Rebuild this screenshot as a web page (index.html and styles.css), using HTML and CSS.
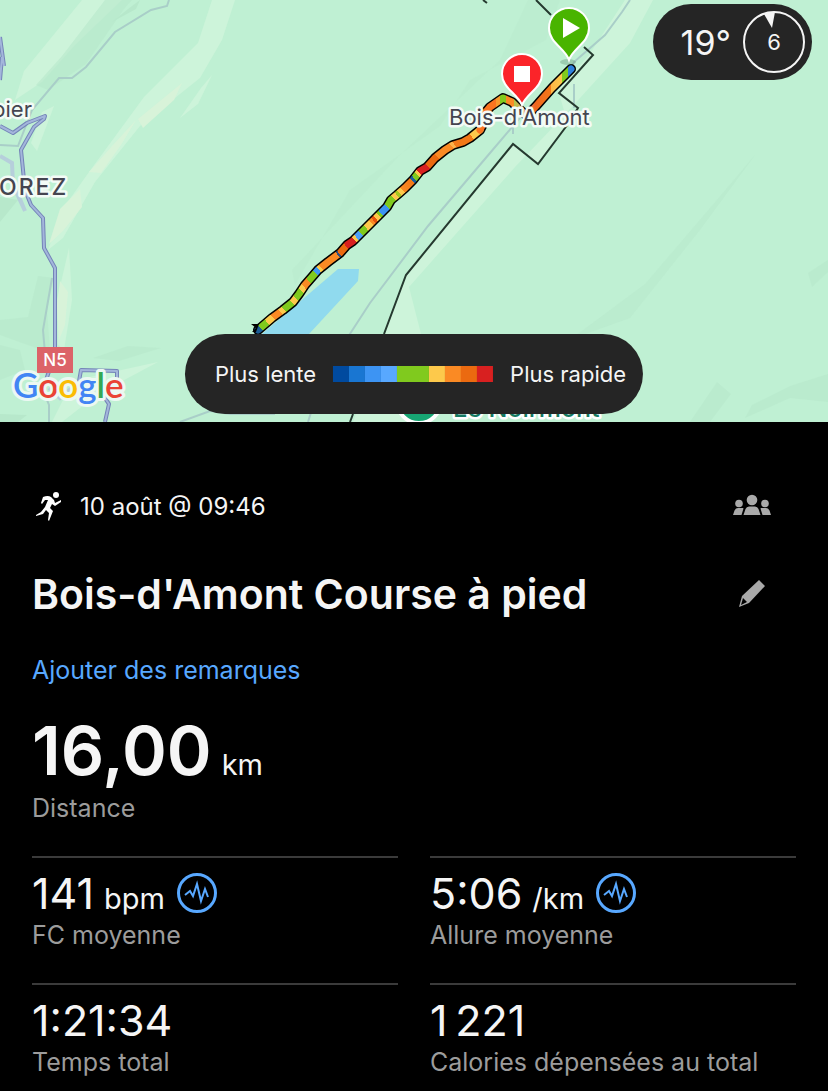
FILE: index.html
```html
<!DOCTYPE html>
<html lang="fr">
<head>
<meta charset="utf-8">
<meta name="viewport" content="width=device-width, initial-scale=1">
<title>Bois-d'Amont Course à pied</title>
<link rel="stylesheet" href="styles.css">
</head>
<body>
<section class="map" aria-label="Parcours">
  <svg class="map-canvas" viewBox="0 0 828 422" preserveAspectRatio="xMidYMid slice" role="img" aria-label="Carte du parcours">
    <defs>
      <linearGradient id="pace" gradientUnits="userSpaceOnUse" x1="258" y1="330" x2="480" y2="128">
        <stop offset="0.01" stop-color="#1c5c94"/><stop offset="0.01" stop-color="#80ca1e"/>
        <stop offset="0.04" stop-color="#80ca1e"/><stop offset="0.04" stop-color="#fdc94b"/>
        <stop offset="0.065" stop-color="#fdc94b"/><stop offset="0.065" stop-color="#fa8a24"/>
        <stop offset="0.095" stop-color="#fa8a24"/><stop offset="0.095" stop-color="#fdc94b"/>
        <stop offset="0.11" stop-color="#fdc94b"/><stop offset="0.11" stop-color="#80ca1e"/>
        <stop offset="0.145" stop-color="#80ca1e"/><stop offset="0.145" stop-color="#fdc94b"/>
        <stop offset="0.165" stop-color="#fdc94b"/><stop offset="0.165" stop-color="#80ca1e"/>
        <stop offset="0.195" stop-color="#80ca1e"/><stop offset="0.195" stop-color="#fdc94b"/>
        <stop offset="0.21" stop-color="#fdc94b"/><stop offset="0.21" stop-color="#fa8a24"/>
        <stop offset="0.235" stop-color="#fa8a24"/><stop offset="0.235" stop-color="#80ca1e"/>
        <stop offset="0.27" stop-color="#80ca1e"/><stop offset="0.27" stop-color="#4098f0"/>
        <stop offset="0.285" stop-color="#4098f0"/><stop offset="0.285" stop-color="#fdc94b"/>
        <stop offset="0.295" stop-color="#fdc94b"/><stop offset="0.295" stop-color="#fa8a24"/>
        <stop offset="0.365" stop-color="#fa8a24"/><stop offset="0.365" stop-color="#30507c"/>
        <stop offset="0.372" stop-color="#30507c"/><stop offset="0.372" stop-color="#eb6a10"/>
        <stop offset="0.405" stop-color="#eb6a10"/><stop offset="0.405" stop-color="#d82020"/>
        <stop offset="0.44" stop-color="#d82020"/><stop offset="0.44" stop-color="#fdc94b"/>
        <stop offset="0.45" stop-color="#fdc94b"/><stop offset="0.45" stop-color="#4fa0f6"/>
        <stop offset="0.47" stop-color="#4fa0f6"/><stop offset="0.47" stop-color="#80ca1e"/>
        <stop offset="0.495" stop-color="#80ca1e"/><stop offset="0.495" stop-color="#fdc94b"/>
        <stop offset="0.52" stop-color="#fdc94b"/><stop offset="0.52" stop-color="#fa8a24"/>
        <stop offset="0.53" stop-color="#fa8a24"/><stop offset="0.53" stop-color="#e9530f"/>
        <stop offset="0.54" stop-color="#e9530f"/><stop offset="0.54" stop-color="#fdc94b"/>
        <stop offset="0.555" stop-color="#fdc94b"/><stop offset="0.555" stop-color="#80ca1e"/>
        <stop offset="0.565" stop-color="#80ca1e"/><stop offset="0.565" stop-color="#3c94f2"/>
        <stop offset="0.595" stop-color="#3c94f2"/><stop offset="0.595" stop-color="#80ca1e"/>
        <stop offset="0.63" stop-color="#80ca1e"/><stop offset="0.63" stop-color="#fdc94b"/>
        <stop offset="0.645" stop-color="#fdc94b"/><stop offset="0.645" stop-color="#a4c820"/>
        <stop offset="0.655" stop-color="#a4c820"/><stop offset="0.655" stop-color="#fdc94b"/>
        <stop offset="0.67" stop-color="#fdc94b"/><stop offset="0.67" stop-color="#fa8a24"/>
        <stop offset="0.715" stop-color="#f27818"/><stop offset="0.715" stop-color="#1e5f9c"/>
        <stop offset="0.725" stop-color="#1e5f9c"/><stop offset="0.725" stop-color="#80ca1e"/>
        <stop offset="0.74" stop-color="#80ca1e"/><stop offset="0.74" stop-color="#fdc94b"/>
        <stop offset="0.75" stop-color="#fdc94b"/><stop offset="0.75" stop-color="#d82020"/>
        <stop offset="0.785" stop-color="#d82020"/><stop offset="0.785" stop-color="#eb6a10"/>
        <stop offset="0.83" stop-color="#eb6a10"/><stop offset="0.83" stop-color="#fa8a24"/>
        <stop offset="0.89" stop-color="#fa8a24"/><stop offset="0.89" stop-color="#fdb34b"/>
        <stop offset="0.9" stop-color="#fdb34b"/><stop offset="0.9" stop-color="#f27818"/>
        <stop offset="0.96" stop-color="#f27818"/><stop offset="0.96" stop-color="#fdc94b"/>
      </linearGradient>
      <linearGradient id="paceNorth" gradientUnits="userSpaceOnUse" x1="484" y1="0" x2="572" y2="0">
        <stop offset="0.14" stop-color="#fa7420"/><stop offset="0.14" stop-color="#f79a2c"/>
        <stop offset="0.18" stop-color="#f79a2c"/><stop offset="0.18" stop-color="#80ca1e"/>
        <stop offset="0.25" stop-color="#80ca1e"/><stop offset="0.25" stop-color="#fa8a24"/>
        <stop offset="0.34" stop-color="#fa8a24"/><stop offset="0.34" stop-color="#b0c845"/>
        <stop offset="0.43" stop-color="#d6a05c"/><stop offset="0.5" stop-color="#ee8780"/>
        <stop offset="0.58" stop-color="#ee6620"/><stop offset="0.76" stop-color="#f27818"/>
        <stop offset="0.76" stop-color="#fdb646"/><stop offset="0.89" stop-color="#fdc94b"/>
        <stop offset="0.89" stop-color="#80ca1e"/><stop offset="0.95" stop-color="#80ca1e"/>
        <stop offset="0.95" stop-color="#2e7fdc"/>
      </linearGradient>
    </defs>
    <rect class="land" width="828" height="422"/>

    <g class="relief-light">
      <path d="M82 0H122L75 45 42 82 15 100 24 71Z"/>
      <path d="M235 0H212L198 43 144 97 89 172 62 210 48 250 63 238 95 182 140 126 200 78 222 40Z"/>
      <path d="M201 88 180 118 198 104 212 75Z"/>
      <path d="M31 143 42 112 54 106 37 151Z"/>
      <path d="M69 248 57 300 58 345 64 350 72 300Z"/>
      <path d="M85 378 158 362 98 394 62 422H52L68 390Z"/>
      <path d="M625 0H653L630 43 560 120 515 167 409 287 421 334H384L406 275 513 144 537 164 568 124 558 90 589 55Z"/>
      <path d="M356 414H420V422H353Z"/>
    </g>
    <g class="relief-warm">
      <path d="M182 83 138 119 143 128 174 100Z"/>
      <path d="M136 120 112 146 89 172 101 173 121 145Z"/>
      <path d="M80 189 60 209 49 244 63 231 82 207Z"/>
      <path d="M60 281 57 305 59 340 65 325 68 292Z"/>
    </g>
    <g class="relief-dark">
      <path d="M105 0 62 56 36 85 48 90 86 64 124 9 132 0Z" opacity=".6"/>
      <path d="M128 9 112 22 136 9 140 0Z"/>
      <path d="M528 0H560L546 40 470 80 440 126 350 190 295 285 292 270 400 155 500 60Z" opacity=".35"/>
      <path d="M755 155 704 215 645 284 571 339 630 318 700 230Z" opacity=".5"/>
      <path d="M828 260 808 273 812 287 828 272Z" opacity=".6"/>
      <path d="M717 382 731 394 710 422H690Z" opacity=".6"/>
      <path d="M828 374 790 386 752 405 745 418 790 398 828 402Z" opacity=".6"/>
      <path d="M38 276 54 278 47 310 50 350 36 348 0 335V320L28 317Z" opacity=".6"/>
      <path d="M93 358 128 346 161 348 119 361Z" opacity=".6"/>
      <path d="M0 345 20 350 25 370 0 380Z" opacity=".6"/>
      <path d="M0 197 18 200 0 222Z"/>
      <path d="M0 414 27 415 18 422H0Z"/>
    </g>
    <path class="lake" d="M262 334 338 269H359L358 281 309 334Z"/>

    <g class="minor-road">
      <path d="M169 0 167 6 151 10 115 32 86 67 72 78H59L32 110 18 146 0 145"/>
      <path d="M52 278 43 330 47 377 45 395 49 405V422"/>
      <path d="M630 0 622 12 605 35 574 62 568 78 530 106 490 153 428 226 370 303 346 340 315 400 308 422"/>
      <path d="M513 112V134M574 84V108M180 422 210 411 230 414H275"/>
    </g>
    <g class="town-road">
      <path d="M0 156 12 163 13 185 25 211 20 199"/>
      <path d="M49 388 60 398 72 388"/>
    </g>
    <g class="major-road">
      <path class="casing" d="M0 37 4 66M0 80 2 57M0 126 13 133 27 123 45 116 44 119 34 127 21 150 25 190 31 205 43 218 44 248 55 268V352"/>
      <path class="core" d="M0 37 4 66M0 80 2 57M0 126 13 133 27 123 45 116 44 119 34 127 21 150 25 190 31 205 43 218 44 248 55 268V352"/>
      <path class="casing" d="M53 360 46 380M78 387 81 370 117 371V389L100 391 109 404 105 422"/>
      <path class="core" d="M53 360 46 380M78 387 81 370 117 371V389L100 391 109 404 105 422"/>
    </g>
    <path class="border-line" d="M536 0 551 15M584 47 593 55 559 93 578 108 568 124 538 164 513 144 406 275 384 334M353 414 350 422M483 0 487 3"/>

    <path class="route-outline" d="M258 330 272 318 283 310 293 302 299 294 305 285 312 277 318 270 328 262 340 253 347 245 353 241 360 234 367 227 377 217 387 207 391 200 397 195 405 188 413 180 420 171 427 167 435 158 445 150 453 145 463 142 470 138 480 130 484 122 485 113 490 107 503 98 512 102 519 109 527 116 537 105 544 97 552 88 563 77 571 69"/>
    <path class="route" stroke="url(#pace)" d="M258 330 272 318 283 310 293 302 299 294 305 285 312 277 318 270 328 262 340 253 347 245 353 241 360 234 367 227 377 217 387 207 391 200 397 195 405 188 413 180 420 171 427 167 435 158 445 150 453 145 463 142 470 138 480 130"/>
    <path class="route" stroke="url(#paceNorth)" d="M480 130 484 122 485 113 490 107 503 98 512 102 519 109 527 116 537 105 544 97 552 88 563 77 571 69"/>
    <path d="M251 324H259L256 332H252L256 328Z"/>

    <text class="place" x="449" y="125">Bois-d'Amont</text>
    <text class="place" x="-8" y="117">bier</text>
    <text class="place town" x="-1" y="195">OREZ</text>

    <rect class="road-sign" x="37" y="347" width="36" height="26"/>
    <text class="road-number" x="55" y="366">N5</text>
    <text class="google" x="13" y="398"><tspan fill="#4285f4">G</tspan><tspan fill="#ea4335">o</tspan><tspan fill="#fbbc05">o</tspan><tspan fill="#4285f4">g</tspan><tspan fill="#34a853">l</tspan><tspan fill="#ea4335">e</tspan></text>

    <circle class="peak" cx="419" cy="401" r="22"/>
    <text class="peak-name" x="453" y="417">Le Noirmont</text>

    <ellipse cx="568" cy="62" rx="8" ry="3" fill="#4c7960" opacity=".3"/>
    <path class="pin" fill="#49b400" d="M569 60C565 48 549 43 549 28A20 20 0 0 1 589 28C589 43 573 48 569 60Z"/>
    <path fill="#fff" d="M563 18V38L580 28Z"/>
    <path class="pin" fill="#fb2429" d="M522 105C517 93 502 88 502 74A20 20 0 0 1 542 74C542 88 527 93 522 105Z"/>
    <rect x="514" y="66" width="16" height="16" fill="#fff"/>
  </svg>

  <div class="weather">
    <span class="temperature">19°</span>
    <span class="wind">
      <svg viewBox="0 0 62 62" aria-hidden="true"><circle cx="31" cy="31" r="30" fill="none" stroke="#f5f5f5" stroke-width="2"/><path d="M21 3Q26 1 32 1L29 17Z" fill="#f5f5f5"/></svg>
      <span class="wind-speed">6</span>
    </span>
  </div>

  <div class="legend">
    <span>Plus lente</span>
    <span class="scale" aria-hidden="true"><i class="p1"></i><i class="p2"></i><i class="p3"></i><i class="p4"></i><i class="p5"></i><i class="p6"></i><i class="p7"></i><i class="p8"></i><i class="p9"></i></span>
    <span>Plus rapide</span>
  </div>
</section>

<main class="details">
  <div class="row meta">
    <svg class="runner" viewBox="0 0 28 28" aria-hidden="true">
      <circle cx="20" cy="3" r="3"/>
      <path d="M7 5Q12 3 15 5L18 8 19 11 25 8 25 10 19 14 16 12 14 16 17 19 13 29 12 28 13 21 10 18 7 22 0 24 0 23 5 20 9 15 12 8 9 8 6 12 5 11Z"/>
    </svg>
    <time class="date" datetime="08-10T09:46">10 août @ 09:46</time>
    <button class="icon-button" type="button" aria-label="Participants">
      <svg viewBox="0 0 40 40" aria-hidden="true"><circle cx="20" cy="14" r="5.3"/><circle cx="7" cy="17.5" r="3.8"/><circle cx="33" cy="17.5" r="3.8"/><path d="M11.5 29 13.5 23Q14.5 20.5 17 20.5H23Q25.500 20.500 26.500 23L28.500 29ZM1 29 2.500 24.500Q3.500 22 6 22H11L11.500 22.500 9.500 29ZM39 29 37.500 24.500Q36.500 22 34 22H29L28.500 22.500 30.500 29Z"/></svg>
    </button>
  </div>

  <div class="row title-row">
    <h1 class="title">Bois-d'Amont Course à pied</h1>
    <button class="icon-button" type="button" aria-label="Modifier le titre">
      <svg viewBox="0 0 40 40" aria-hidden="true"><path fill-rule="evenodd" d="M27 6 33 12 17 29 7 33 10 22ZM11 24 9 31 15 28Z"/></svg>
    </button>
  </div>

  <a class="notes" href="#remarques">Ajouter des remarques</a>

  <dl class="stat distance">
    <dd class="value"><span class="number">16,00</span><span class="unit">km</span></dd>
    <dt class="label">Distance</dt>
  </dl>

  <div class="stats">
    <dl class="stat">
      <dd class="value"><span class="number">141</span><span class="unit">bpm</span>
        <button class="chart-button" type="button" aria-label="Graphique de la FC"><svg viewBox="0 0 40 40" aria-hidden="true"><circle cx="20" cy="20" r="18.500"/><path class="pulse" d="M8 22 13 18 16 23 20 11 24 28 28 16 31 24"/></svg></button></dd>
      <dt class="label">FC moyenne</dt>
    </dl>
    <dl class="stat">
      <dd class="value"><span class="number">5:06</span><span class="unit">/km</span>
        <button class="chart-button" type="button" aria-label="Graphique de l'allure"><svg viewBox="0 0 40 40" aria-hidden="true"><circle cx="20" cy="20" r="18.500"/><path class="pulse" d="M8 22 13 18 16 23 20 11 24 28 28 16 31 24"/></svg></button></dd>
      <dt class="label">Allure moyenne</dt>
    </dl>
    <dl class="stat">
      <dd class="value"><span class="number">1:21:34</span></dd>
      <dt class="label">Temps total</dt>
    </dl>
    <dl class="stat">
      <dd class="value"><span class="number">1&#8239;221</span></dd>
      <dt class="label">Calories dépensées au total</dt>
    </dl>
  </div>
</main>
</body>
</html>
```
FILE: styles.css
```css
* {
  box-sizing: border-box;
}

body {
  margin: 0;
  background: #000;
  color: #f5f5f5;
  font-family: Inter, Roboto, sans-serif;
}

button {
  padding: 0;
  border: 0;
  background: none;
  cursor: pointer;
}

svg {
  display: block;
}

/* Map */
.map {
  position: relative;
  height: 422px;
  overflow: hidden;
}

.map-canvas {
  width: 100%;
  height: 100%;
}

.land { fill: #bff0d3; }
.relief-light { fill: #cdf4da; }
.relief-warm { fill: #d8f3d9; }
.relief-dark { fill: #b7e8cb; }
.lake { fill: #90daee; }

.minor-road {
  fill: none;
  stroke: #a9cec8;
  stroke-width: 2;
}

.town-road {
  fill: none;
  stroke: #b6cfdb;
  stroke-width: 4;
}

.major-road {
  fill: none;
  stroke-linejoin: round;
}

.casing {
  stroke: #7484b8;
  stroke-width: 4;
}

.core {
  stroke: #a3b6db;
  stroke-width: 2;
}

.border-line {
  fill: none;
  stroke: #25392f;
  stroke-width: 2;
}

.route-outline,
.route {
  fill: none;
  stroke-linecap: round;
  stroke-linejoin: round;
}

.route-outline {
  stroke: #000;
  stroke-width: 10;
}

.route {
  stroke-width: 7;
}

.place {
  fill: #454550;
  stroke: #f3fbf6;
  stroke-width: 5;
  stroke-linejoin: round;
  paint-order: stroke;
  font-size: 22px;
}

.town {
  font-size: 23px;
  font-weight: 500;
  letter-spacing: 2px;
}

.road-sign {
  fill: #dc6368;
}

.road-number {
  fill: #fff;
  font-size: 17px;
  font-weight: 500;
  text-anchor: middle;
}

.google {
  stroke: #ecf8f2;
  stroke-width: 6;
  stroke-linejoin: round;
  paint-order: stroke;
  font-family: Lato, sans-serif;
  font-size: 35px;
  font-weight: 600;
}

.peak {
  fill: #17a673;
  stroke: #fff;
  stroke-width: 4;
}

.peak-name {
  fill: #157a62;
  stroke: #fff;
  stroke-width: 5;
  stroke-linejoin: round;
  paint-order: stroke;
  font-size: 25px;
  font-weight: 500;
}

.pin {
  stroke: #fff;
  stroke-width: 2;
}

.weather,
.legend {
  position: absolute;
  display: flex;
  align-items: center;
  border-radius: 40px;
  background: #252525;
}

.weather {
  top: 4px;
  right: 16px;
  height: 76px;
  gap: 12px;
  padding: 0 7px 0 28px;
}

.temperature {
  font-size: 34px;
  font-weight: 400;
}

.wind {
  display: grid;
  width: 62px;
  height: 62px;
  place-items: center;
}

.wind > * {
  grid-area: 1 / 1;
}

.wind-speed {
  font-size: 22px;
}

.legend {
  bottom: 8px;
  left: 50%;
  height: 80px;
  gap: 17px;
  padding: 0 17px 0 30px;
  transform: translateX(-50%);
  font-size: 22px;
  white-space: nowrap;
}

.scale {
  display: flex;
}

.scale i {
  width: 16px;
  height: 16px;
}

.scale .p5 {
  width: 32px;
}

.p1 { background: #004a9f; }
.p2 { background: #1976d2; }
.p3 { background: #3d94f3; }
.p4 { background: #58a8ff; }
.p5 { background: #80ca1e; }
.p6 { background: #fdc94b; }
.p7 { background: #fa8a24; }
.p8 { background: #eb6a10; }
.p9 { background: #d82020; }

/* Activity details */
.details {
  display: flex;
  flex-direction: column;
  padding: 64px 32px 12px;
}

.row {
  display: flex;
  align-items: center;
  padding-right: 24px;
}

.runner {
  width: 28px;
  height: 28px;
  margin: 0 16px 0 4px;
  overflow: visible;
  fill: #fff;
}

.date {
  flex: 1;
  font-size: 24px;
}

.icon-button {
  width: 40px;
  height: 40px;
}

.icon-button svg {
  fill: #a9a9a9;
}

.title-row {
  margin-top: 40px;
}

.title {
  flex: 1;
  margin: 0;
  font-size: 41px;
  font-weight: 600;
  line-height: 56px;
}

.notes {
  align-self: flex-start;
  margin-top: 32px;
  color: #58a8ff;
  font-size: 25px;
  line-height: 32px;
  text-decoration: none;
}

.stat,
.value {
  margin: 0;
}

.value {
  display: flex;
  height: 48px;
  align-items: baseline;
  gap: 10px;
}

.number {
  font-size: 43px;
  line-height: 48px;
}

.unit {
  font-size: 29px;
}

.label {
  margin-top: 2px;
  color: #9c9c9c;
  font-size: 25px;
  line-height: 32px;
}

.distance {
  margin: 28px 0 32px;
}

.distance .value {
  height: 76px;
}

.distance .number {
  font-size: 68px;
  font-weight: 600;
  line-height: 72px;
}

.stats {
  display: grid;
  grid-template-columns: 1fr 1fr;
  gap: 32px;
}

.stats .stat {
  padding-top: 11px;
  border-top: 2px solid #3b3b3b;
}

.chart-button {
  align-self: center;
  width: 40px;
  height: 40px;
  margin-left: 2px;
}

.chart-button svg {
  fill: none;
  stroke: #58a8ff;
  stroke-width: 3;
}

.chart-button .pulse {
  stroke-width: 2;
}
```
